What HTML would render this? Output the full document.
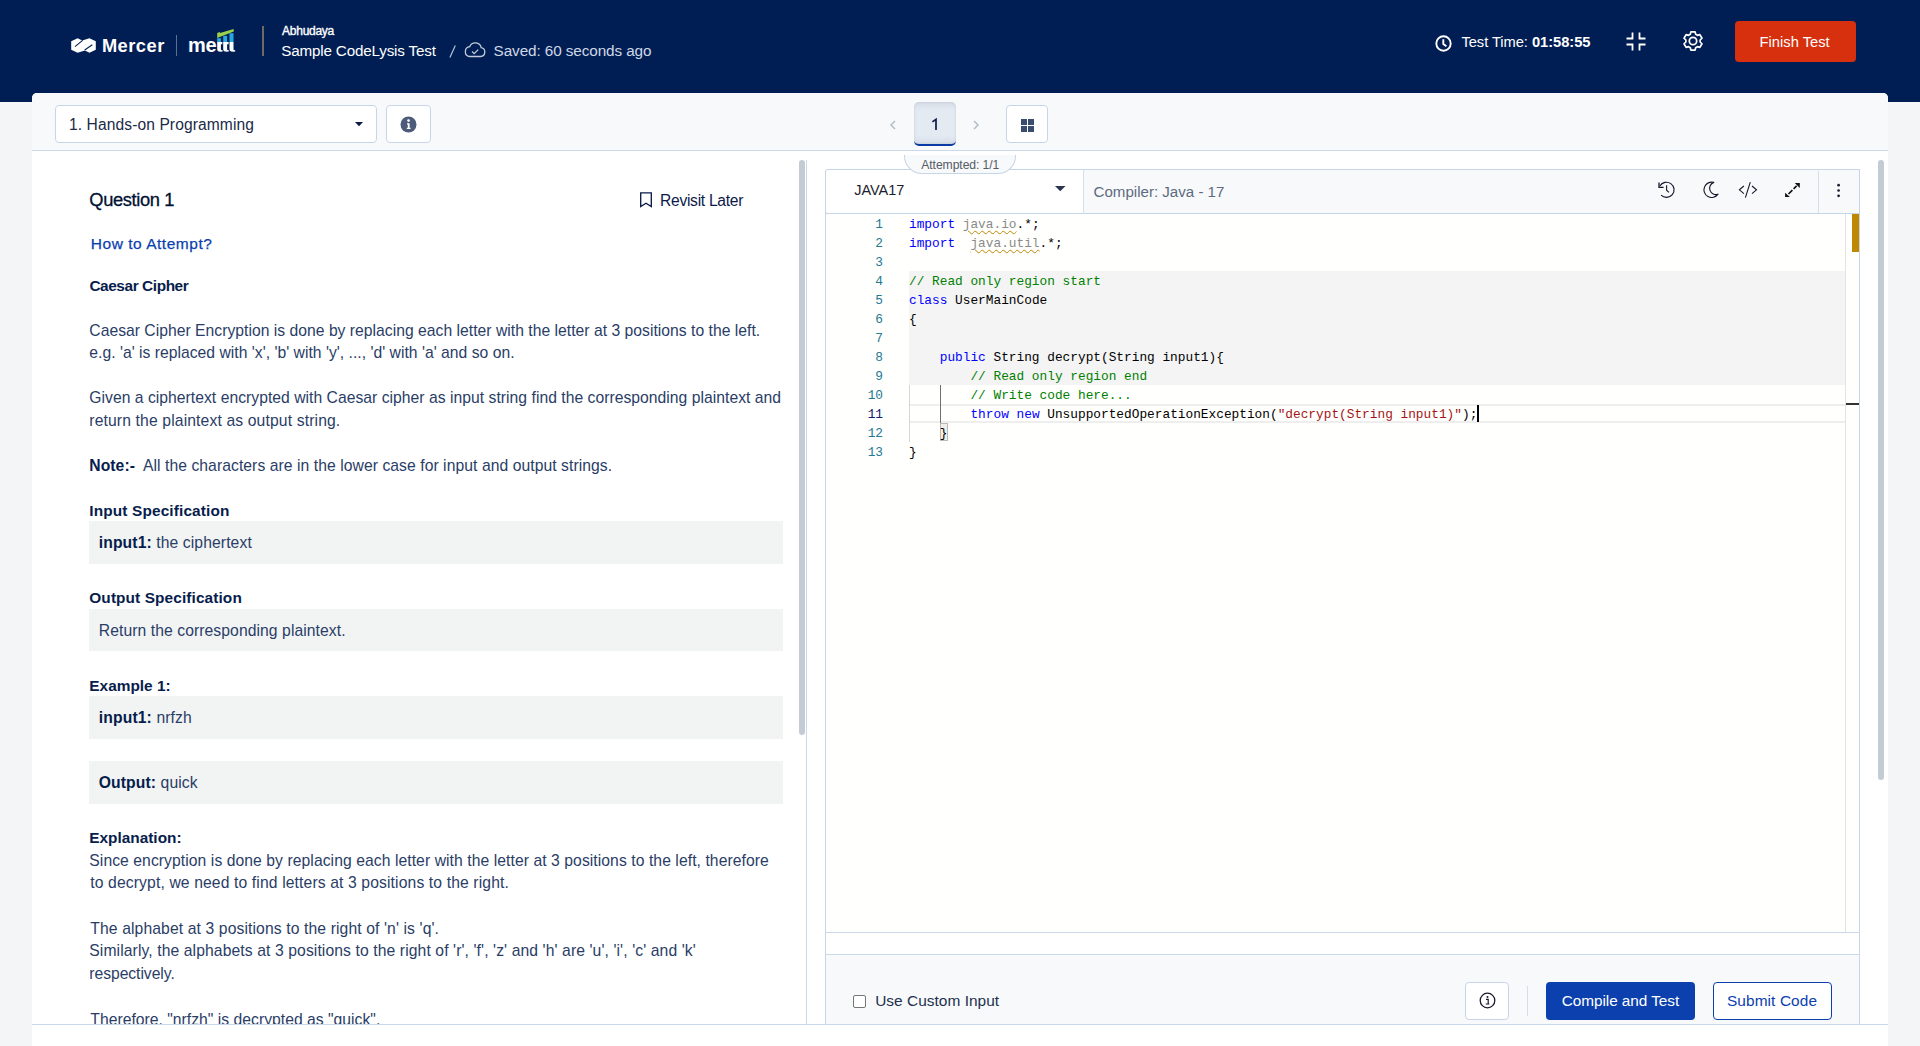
<!DOCTYPE html>
<html><head><meta charset="utf-8">
<style>
*{box-sizing:border-box;margin:0;padding:0}
html,body{width:1920px;height:1046px;overflow:hidden;background:#f4f5f7;font-family:"Liberation Sans",sans-serif}
body{position:relative}
.a{position:absolute;white-space:pre;line-height:1}
svg{position:absolute;overflow:visible}
b{font-weight:bold}
#hdr{position:absolute;left:0;top:0;width:1920px;height:102px;background:#001e54}
#card{position:absolute;left:32px;top:93px;width:1856px;height:953px;background:#fff;border-radius:5px 5px 0 0}
.ln{position:absolute;background:#c9d9ea}
.box{position:absolute;background:#fff;border:1px solid #c6d6e8;border-radius:4px}
.gbox{position:absolute;left:89px;width:694px;background:#f2f4f4}
.code{position:absolute;font-family:"Liberation Mono",monospace;font-size:12.8px;line-height:19px;white-space:pre;color:#000}
.kw{color:#0000ff}.cm{color:#008000}.st{color:#a31515}.gr{color:#8a8a8a}
.k{color:#071d4c}
.sq{text-decoration:underline wavy #bf8803;text-decoration-thickness:1px;text-underline-offset:2px}
</style></head><body>
<!-- HEADER -->
<div id="hdr">
  <svg style="left:71px;top:38px" width="25" height="15" viewBox="0 0 25 15">
    <path d="M0.2 3.2 L6.6 0.2 L11.3 2.4 L18.4 0.2 L24.8 3.2 L24.8 11.8 L18.4 14.8 L13.9 12.6 L6.6 14.8 L0.2 11.8 Z" fill="#fff"/>
    <path d="M4 8.6 L11.6 2.4 M13.7 12 L21.3 6.8" stroke="#001e54" stroke-width="1.1" fill="none"/>
  </svg>
  <div style="position:absolute;left:176px;top:35px;width:1px;height:21px;background:#5c6f8f"></div>
  <svg style="left:200px;top:25px" width="40" height="30" viewBox="200 25 40 30">
    <rect x="217.2" y="38.2" width="3.7" height="3.9" fill="#29a8e0"/>
    <rect x="223.2" y="35.8" width="3.9" height="6.3" fill="#29a8e0"/>
    <rect x="229.5" y="33.2" width="4" height="8.9" fill="#29a8e0"/>
    <path d="M217.2 42 H222.4 V44.2 H220.9 V49.6 Q221 50.4 222.6 50.3 V51.6 Q219 52 217.9 51 Q217.2 50.3 217.2 49 Z M223.2 42 H228.6 V44.2 H227.1 V49.6 Q227.2 50.4 228.8 50.3 V51.6 Q225 52 223.9 51 Q223.2 50.3 223.2 49 Z M229.5 42 H233.5 V49.6 Q233.6 50.4 235.2 50.3 V51.6 Q231.3 52 230.2 51 Q229.5 50.3 229.5 49 Z" fill="#fff"/>
    <path d="M217.2 33 L219.7 32 L220 33 L233.7 28.9 L233.7 31.6 L217.2 38.1 Z" fill="#9bd148"/>
  </svg>
  <div style="position:absolute;left:262px;top:26px;width:2px;height:30px;background:#6e6a66"></div>
  <svg style="left:464px;top:42px" width="22" height="16" viewBox="0 0 22 16">
    <path d="M5.5 14.5 H16.5 A4.5 4.5 0 0 0 17.2 5.6 A6 6 0 0 0 5.8 4.6 A5 5 0 0 0 5.5 14.5 Z" fill="none" stroke="#c0cbdb" stroke-width="1.3"/>
    <path d="M8 9.5 L10.2 11.6 L14.2 7.6" fill="none" stroke="#c0cbdb" stroke-width="1.3"/>
  </svg>
  <svg style="left:1435px;top:34.5px" width="17" height="17" viewBox="0 0 17 17">
    <circle cx="8.5" cy="8.5" r="7.2" fill="none" stroke="#fff" stroke-width="1.9"/>
    <path d="M8.3 4.3 V9 L11.4 11.2" fill="none" stroke="#fff" stroke-width="1.9"/>
  </svg>
  <svg style="left:1626px;top:32px" width="20" height="19" viewBox="0 0 20 19">
    <path d="M6.5 0.5 V6.5 H0.5 M13.5 0.5 V6.5 H19.5 M0.5 12.5 H6.5 V18.5 M19.5 12.5 H13.5 V18.5" fill="none" stroke="#fff" stroke-width="1.8"/>
  </svg>
  <svg style="left:1681px;top:29.2px" width="24" height="24" viewBox="0 0 24 24">
    <circle cx="12" cy="12" r="3.7" fill="none" stroke="#fff" stroke-width="1.75"/>
    <path d="M9.30 5.32 L9.89 2.84 L14.11 2.84 L14.70 5.32 L16.43 6.33 L18.87 5.59 L20.99 9.25 L19.13 11.00 L19.13 13.00 L20.99 14.75 L18.87 18.41 L16.43 17.67 L14.70 18.68 L14.11 21.160 L9.89 21.16 L9.30 18.68 L7.57 17.67 L5.13 18.41 L3.01 14.75 L4.87 13.00 L4.87 11.00 L3.01 9.25 L5.13 5.59 L7.57 6.33Z" fill="none" stroke="#fff" stroke-width="1.7" stroke-linejoin="round"/>
  </svg>
  <div style="position:absolute;left:1735px;top:21px;width:121px;height:41px;background:#d6300e;border-radius:4px"></div>
</div>
<div class="a" style="left:101.90px;top:37.10px;font-size:18.3px;color:#fff;font-weight:bold;letter-spacing:0.45px;letter-spacing:0.490px;">Mercer</div>
<div class="a" style="left:188.00px;top:35.21px;font-size:20px;color:#fff;font-weight:bold;letter-spacing:-0.3px;">me</div>
<div class="a" style="left:282.10px;top:24.81px;font-size:12px;color:#fff;-webkit-text-stroke:0.35px #fff;letter-spacing:-0.270px;">Abhudaya</div>
<div class="a" style="left:281.30px;top:42.81px;font-size:15.2px;color:#fff;;letter-spacing:-0.165px;">Sample CodeLysis Test</div>
<svg style="left:440px;top:40px" width="20" height="20" viewBox="440 40 20 20"><path d="M455.3 45.6 L449.9 57.6" stroke="#b9c7dc" stroke-width="1.15"/></svg>
<div class="a" style="left:493.60px;top:43.00px;font-size:15.3px;color:#cfd8e6;;letter-spacing:-0.100px;">Saved: 60 seconds ago</div>
<div class="a" style="left:1461.40px;top:34.91px;font-size:14.7px;color:#fff;;letter-spacing:-0.040px;">Test Time: <b>01:58:55</b></div>
<div class="a" style="left:1759.60px;top:35.10px;font-size:14.7px;color:#fff;;letter-spacing:0.010px;">Finish Test</div>
<div id="card"></div>
<div style="position:absolute;left:32px;top:93px;width:1856px;height:57px;background:#f8f9fb;border-radius:5px 5px 0 0"></div>
<div class="ln" style="left:32px;top:150px;width:1856px;height:1px"></div>
<div class="box" style="left:55px;top:105px;width:322px;height:38px"></div>
<svg style="left:355px;top:122px" width="8" height="5" viewBox="0 0 8 5"><path d="M0 0 H8 L4 4.3Z" fill="#0b1a48"/></svg>
<div class="box" style="left:386px;top:105px;width:45px;height:38px"></div>
<svg style="left:400.2px;top:115.5px" width="17" height="17" viewBox="0 0 17 17"><circle cx="8.5" cy="8.5" r="8" fill="#4c5c79"/><circle cx="8.5" cy="4.6" r="1.3" fill="#fff"/><path d="M7 7.3 H9.6 V11.8 H10.6 V13 H6.8 V11.8 H7.8 V8.5 H7Z" fill="#fff"/></svg>
<svg style="left:889px;top:120px" width="8" height="10" viewBox="0 0 8 10"><path d="M6 1 L2 5 L6 9" fill="none" stroke="#b3bcc8" stroke-width="1.5"/></svg>
<div style="position:absolute;left:914px;top:102px;width:42px;height:44px;border-radius:5px;background:linear-gradient(#d5dde7,#e4eaf2 20%,#e4eaf2 80%,#d5dde7);box-shadow:inset 0 0 3px rgba(0,0,0,.12);border-bottom:2.5px solid #0a3aa6"></div>
<svg style="left:972px;top:120px" width="8" height="10" viewBox="0 0 8 10"><path d="M2 1 L6 5 L2 9" fill="none" stroke="#b3bcc8" stroke-width="1.5"/></svg>
<div class="box" style="left:1006px;top:105px;width:42px;height:38px"></div>
<svg style="left:1021px;top:119px" width="13" height="13" viewBox="0 0 13 13"><rect x="0" y="0" width="6" height="6" fill="#3b4d6c"/><rect x="7" y="0" width="6" height="6" fill="#3b4d6c"/><rect x="0" y="7" width="6" height="6" fill="#3b4d6c"/><rect x="7" y="7" width="6" height="6" fill="#3b4d6c"/></svg>
<div class="a" style="left:69.00px;top:117.01px;font-size:15.6px;color:#1b2a48;;letter-spacing:0.091px;">1. Hands-on Programming</div>
<svg style="left:920px;top:110px" width="30" height="30" viewBox="920 110 30 30"><path d="M932.4 121.9 L936 119.3 V130" fill="none" stroke="#0c1a4a" stroke-width="1.7"/></svg>
<div class="ln" style="left:806px;top:160px;width:1px;height:864px;background:#c9d9ea"></div>
<div style="position:absolute;left:799px;top:160px;width:6px;height:575px;border-radius:3px;background:#c3cbd5"></div>
<div class="a" style="left:89.30px;top:191.21px;font-size:18.3px;color:#001233;-webkit-text-stroke:0.3px #001233;letter-spacing:-0.4px;letter-spacing:-0.364px;">Question 1</div>
<svg style="left:630px;top:185px" width="30" height="30" viewBox="630 185 30 30"><path d="M640.7 192.9 H651.3 V206.6 L646 203.2 L640.7 206.6Z" fill="none" stroke="#0b1a4a" stroke-width="1.35" stroke-linejoin="miter"/></svg>
<div class="a" style="left:660.00px;top:192.71px;font-size:15.6px;color:#0b1a4a;;letter-spacing:-0.273px;">Revisit Later</div>
<div class="a" style="left:90.80px;top:236.00px;font-size:15.5px;color:#0a3fb0;-webkit-text-stroke:0.25px #0a3fb0;letter-spacing:0.524px;">How to Attempt?</div>
<div class="a" style="left:89.40px;top:278.31px;font-size:15.4px;color:#071d4c;font-weight:bold;;letter-spacing:-0.417px;">Caesar Cipher</div>
<div class="a" style="left:89.30px;top:323.31px;font-size:15.7px;color:#2a3d66;;letter-spacing:0.020px;">Caesar Cipher Encryption is done by replacing each letter with the letter at 3 positions to the left.</div>
<div class="a" style="left:89.30px;top:344.91px;font-size:15.7px;color:#2a3d66;;letter-spacing:0.017px;">e.g. 'a' is replaced with 'x', 'b' with 'y', ..., 'd' with 'a' and so on.</div>
<div class="a" style="left:89.30px;top:390.21px;font-size:15.7px;color:#2a3d66;;letter-spacing:0.029px;">Given a ciphertext encrypted with Caesar cipher as input string find the corresponding plaintext and</div>
<div class="a" style="left:89.30px;top:413.31px;font-size:15.7px;color:#2a3d66;;letter-spacing:0.135px;">return the plaintext as output string.</div>
<div class="a" style="left:89.30px;top:458.31px;font-size:15.7px;color:#2a3d66;;letter-spacing:0.063px;"><b class="k">Note:-</b>  All the characters are in the lower case for input and output strings.</div>
<div class="a" style="left:89.30px;top:503.31px;font-size:15.4px;color:#071d4c;font-weight:bold;;letter-spacing:0.137px;">Input Specification</div>
<div class="gbox" style="top:521px;height:43px"></div>
<div class="a" style="left:98.80px;top:534.91px;font-size:15.7px;color:#2a3d66;;letter-spacing:0.101px;"><b class="k">input1:</b> the ciphertext</div>
<div class="a" style="left:89.30px;top:590.01px;font-size:15.4px;color:#071d4c;font-weight:bold;;letter-spacing:0.105px;">Output Specification</div>
<div class="gbox" style="top:609px;height:42px"></div>
<div class="a" style="left:98.80px;top:622.91px;font-size:15.7px;color:#2a3d66;;letter-spacing:0.076px;">Return the corresponding plaintext.</div>
<div class="a" style="left:89.30px;top:677.61px;font-size:15.4px;color:#071d4c;font-weight:bold;;letter-spacing:0.012px;">Example 1:</div>
<div class="gbox" style="top:696px;height:43px"></div>
<div class="a" style="left:98.80px;top:709.91px;font-size:15.7px;color:#2a3d66;;letter-spacing:0.120px;"><b class="k">input1:</b> nrfzh</div>
<div class="gbox" style="top:761px;height:43px"></div>
<div class="a" style="left:98.80px;top:775.21px;font-size:15.7px;color:#2a3d66;;letter-spacing:0.099px;"><b class="k">Output:</b> quick</div>
<div class="a" style="left:89.30px;top:830.31px;font-size:15.4px;color:#071d4c;font-weight:bold;;letter-spacing:-0.010px;">Explanation:</div>
<div class="a" style="left:89.30px;top:852.81px;font-size:15.7px;color:#2a3d66;;letter-spacing:0.070px;">Since encryption is done by replacing each letter with the letter at 3 positions to the left, therefore</div>
<div class="a" style="left:90.30px;top:875.31px;font-size:15.7px;color:#2a3d66;;letter-spacing:0.124px;">to decrypt, we need to find letters at 3 positions to the right.</div>
<div class="a" style="left:90.30px;top:921.21px;font-size:15.7px;color:#2a3d66;;letter-spacing:0.114px;">The alphabet at 3 positions to the right of 'n' is 'q'.</div>
<div class="a" style="left:89.30px;top:942.81px;font-size:15.7px;color:#2a3d66;;letter-spacing:0.101px;">Similarly, the alphabets at 3 positions to the right of 'r', 'f', 'z' and 'h' are 'u', 'i', 'c' and 'k'</div>
<div class="a" style="left:89.30px;top:966.21px;font-size:15.7px;color:#2a3d66;;letter-spacing:-0.047px;">respectively.</div>
<div class="a" style="left:90.30px;top:1012.01px;font-size:15.7px;color:#2a3d66;;letter-spacing:0.022px;">Therefore, "nrfzh" is decrypted as "quick".</div>
<div style="position:absolute;left:32px;top:1024px;width:1856px;height:22px;background:#fff"></div>
<div class="ln" style="left:32px;top:1024px;width:1856px;height:1px"></div>
<div style="position:absolute;left:1878px;top:160px;width:6px;height:620px;border-radius:3px;background:#c3cbd5"></div>
<!-- editor box -->
<div style="position:absolute;left:825px;top:169px;width:1035px;height:855px;border:1px solid #c6d6e8;border-bottom:none;background:#fffffd;border-radius:3px 1px 0 0"></div>
<div style="position:absolute;left:826px;top:170px;width:1033px;height:44px;background:#f8f9fb;border-bottom:1px solid #c6d6e8;border-radius:3px 0 0 0"></div>
<div style="position:absolute;left:826px;top:170px;width:258px;height:44px;background:#fff;border-right:1px solid #d5e0ec;border-bottom:1px solid #c6d6e8;border-radius:3px 0 0 3px"></div>
<svg style="left:1055px;top:186px" width="11" height="6" viewBox="0 0 11 6"><path d="M0 0 H10.5 L5.25 5.2Z" fill="#2a3550"/></svg>
<div style="position:absolute;left:1818px;top:171px;width:1px;height:42px;background:#d5dde6"></div>
<!-- icons -->
<svg style="left:1650px;top:175px" width="160" height="30" viewBox="1650 175 160 30">
  <path d="M1659.9 186 A7.6 7.6 0 1 1 1661.1 195.2" fill="none" stroke="#15162a" stroke-width="1.15"/>
  <path d="M1659 182.6 V187.4 H1663.6" fill="none" stroke="#15162a" stroke-width="1.3"/>
  <path d="M1666.6 185.2 V190.2 L1668.9 192.4" fill="none" stroke="#15162a" stroke-width="1.1"/>
  <path d="M1713.8 182.4 A7.7 7.7 0 1 0 1718 194.2 A6.2 6.2 0 0 1 1713.8 182.4 Z" fill="none" stroke="#15162a" stroke-width="1.15" stroke-linejoin="round"/>
  <path d="M1743.9 186 L1739.4 189.8 L1743.9 193.7 M1752 186 L1756.5 189.8 L1752 193.7 M1750.3 182.2 L1745.4 197.6" fill="none" stroke="#15162a" stroke-width="1.1"/>
  <path d="M1788.5 194 L1792.4 190.1 M1793.6 188.9 L1796.6 185.9" fill="none" stroke="#111" stroke-width="1.6"/>
  <path d="M1794.8 183.1 H1799.8 V188.1 Z M1785.1 192.8 V197 H1789.9 Z" fill="#111"/>
</svg>
<svg style="left:1836px;top:183px" width="5" height="15" viewBox="0 0 5 15">
  <circle cx="2.6" cy="2.2" r="1.35" fill="#1a1a2e"/><circle cx="2.6" cy="7.5" r="1.35" fill="#1a1a2e"/><circle cx="2.6" cy="12.8" r="1.35" fill="#1a1a2e"/>
</svg>
<div class="a" style="left:854.30px;top:183.01px;font-size:14.5px;color:#1a1d2e;;letter-spacing:-0.060px;">JAVA17</div>
<div class="a" style="left:1093.50px;top:184.00px;font-size:15.1px;color:#5d6b80;;letter-spacing:0.003px;">Compiler: Java - 17</div>
<div style="position:absolute;left:904px;top:155px;width:112px;height:19px;background:#f8f9fb;border:1px solid #c6d6e8;border-top:none;border-radius:0 0 18px 18px / 0 0 18px 18px"></div>
<div class="a" style="left:921.30px;top:159.00px;font-size:12.15px;color:#555b63;;letter-spacing:-0.072px;">Attempted: 1/1</div>
<div style="position:absolute;left:909px;top:271px;width:936px;height:114px;background:#f4f4f4"></div>
<div style="position:absolute;left:909px;top:404px;width:936px;height:19px;border-top:2px solid #eeeeee;border-bottom:2px solid #eeeeee"></div>
<div style="position:absolute;left:909px;top:385px;width:1px;height:57px;background:#d6d6d6"></div>
<div style="position:absolute;left:940px;top:385px;width:1px;height:38px;background:#707070"></div>
<div style="position:absolute;left:940px;top:423px;width:8px;height:18px;border:1px solid #b9b9b9;background:#f0f0e8"></div>
<div style="position:absolute;left:1845px;top:214px;width:1px;height:718px;background:#e3e3e3"></div>
<div style="position:absolute;left:1852px;top:214px;width:7px;height:38px;background:#bf8803"></div>
<div style="position:absolute;left:1846px;top:403px;width:13px;height:2px;background:#333"></div>
<div style="position:absolute;left:1477px;top:405px;width:2px;height:17px;background:#000"></div>
<div class="code" style="left:840px;top:215px;width:43px;text-align:right;color:#237893">1</div>
<div class="code" style="left:840px;top:234px;width:43px;text-align:right;color:#237893">2</div>
<div class="code" style="left:840px;top:253px;width:43px;text-align:right;color:#237893">3</div>
<div class="code" style="left:840px;top:272px;width:43px;text-align:right;color:#237893">4</div>
<div class="code" style="left:840px;top:291px;width:43px;text-align:right;color:#237893">5</div>
<div class="code" style="left:840px;top:310px;width:43px;text-align:right;color:#237893">6</div>
<div class="code" style="left:840px;top:329px;width:43px;text-align:right;color:#237893">7</div>
<div class="code" style="left:840px;top:348px;width:43px;text-align:right;color:#237893">8</div>
<div class="code" style="left:840px;top:367px;width:43px;text-align:right;color:#237893">9</div>
<div class="code" style="left:840px;top:386px;width:43px;text-align:right;color:#237893">10</div>
<div class="code" style="left:840px;top:405px;width:43px;text-align:right;color:#0b216f">11</div>
<div class="code" style="left:840px;top:424px;width:43px;text-align:right;color:#237893">12</div>
<div class="code" style="left:840px;top:443px;width:43px;text-align:right;color:#237893">13</div>
<div class="code" style="left:909px;top:215px"><span class="kw">import</span> <span class="gr sq">java.io</span>.*;</div>
<div class="code" style="left:909px;top:234px"><span class="kw">import</span>  <span class="gr sq">java.util</span>.*;</div>
<div class="code" style="left:909px;top:253px"></div>
<div class="code" style="left:909px;top:272px"><span class="cm">// Read only region start</span></div>
<div class="code" style="left:909px;top:291px"><span class="kw">class</span> UserMainCode</div>
<div class="code" style="left:909px;top:310px">{</div>
<div class="code" style="left:909px;top:329px"></div>
<div class="code" style="left:909px;top:348px">    <span class="kw">public</span> String decrypt(String input1){</div>
<div class="code" style="left:909px;top:367px">        <span class="cm">// Read only region end</span></div>
<div class="code" style="left:909px;top:386px">        <span class="cm">// Write code here...</span></div>
<div class="code" style="left:909px;top:405px">        <span class="kw">throw</span> <span class="kw">new</span> UnsupportedOperationException(<span class="st">"decrypt(String input1)"</span>);</div>
<div class="code" style="left:909px;top:424px">    }</div>
<div class="code" style="left:909px;top:443px">}</div>
<div class="ln" style="left:825px;top:932px;width:1035px;height:1px"></div>
<div style="position:absolute;left:826px;top:933px;width:1033px;height:21px;background:#fff"></div>
<div class="ln" style="left:825px;top:954px;width:1035px;height:1px"></div>
<div style="position:absolute;left:826px;top:955px;width:1033px;height:69px;background:#f8f9fb"></div>
<div style="position:absolute;left:853px;top:995px;width:13px;height:13px;border:1px solid #767676;border-radius:2px;background:#fff"></div>
<div style="position:absolute;left:1465px;top:982px;width:44px;height:38px;border:1px solid #c6d6e8;border-radius:4px;background:#fff"></div>
<svg style="left:1479px;top:991.5px" width="17" height="17" viewBox="0 0 17 17"><circle cx="8.5" cy="8.5" r="7.3" fill="none" stroke="#1a1a2e" stroke-width="1.3"/><circle cx="8.5" cy="5" r="1" fill="#1a1a2e"/><path d="M7 7.3 H9.2 V12 H10.3 M6.7 12 H10.3" fill="none" stroke="#1a1a2e" stroke-width="1.2"/></svg>
<div style="position:absolute;left:1527px;top:986px;width:1px;height:30px;background:#d5dde6"></div>
<div style="position:absolute;left:1546px;top:982px;width:149px;height:38px;background:#0b40ae;border-radius:4px"></div>
<div style="position:absolute;left:1713px;top:982px;width:119px;height:38px;border:1px solid #0b40ae;border-radius:4px;background:#fff"></div>
<div class="a" style="left:875.20px;top:993.01px;font-size:15.45px;color:#23304d;;letter-spacing:0.021px;">Use Custom Input</div>
<div class="a" style="left:1561.75px;top:993.31px;font-size:15.34px;color:#fff;;letter-spacing:-0.048px;">Compile and Test</div>
<div class="a" style="left:1727.00px;top:993.31px;font-size:15.4px;color:#0b40ae;;letter-spacing:0.100px;">Submit Code</div>
</body></html>
